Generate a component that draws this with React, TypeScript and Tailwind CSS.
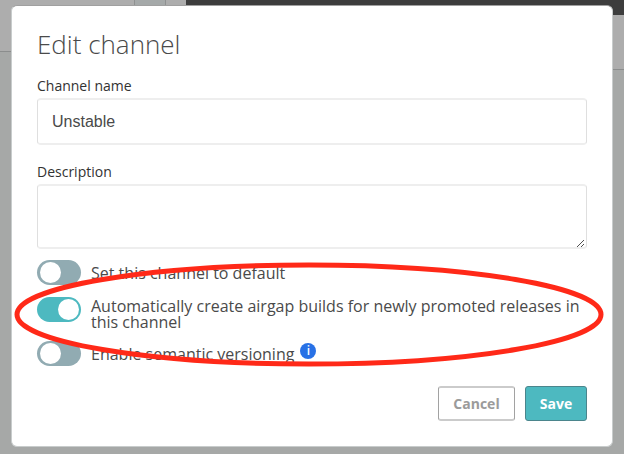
function Toggle({ on = false }: { on?: boolean }) {
  return (
    <span
      className={`flex h-[25px] w-11 shrink-0 items-center rounded-full ${
        on ? 'justify-end bg-[#4db9c0] pr-0.5' : 'justify-start bg-[#91abb2] pl-[3px]'
      }`}
    >
      <span className={on ? 'size-[21px] rounded-full bg-white' : 'size-[21px] rounded-full bg-white'} />
    </span>
  );
}

function Backdrop() {
  return (
    <div className="flex h-[454px] w-full">
      <div className="flex w-[186px] flex-col">
        <div className="flex h-[52px] shrink-0 border-b border-[#8b8d8d] bg-[#adadad]">
          <div className="ml-[134px] w-8 border-x border-[#8f9191] bg-[#a5a9a9]" />
        </div>
        <div className="flex-1 bg-[#a6a8a7]" />
      </div>
      <div className="flex flex-1 flex-col">
        <div className="h-[15px] bg-[#3d3d3d]" />
        <div className="h-[55px] border-b border-[#8b8d8d] bg-[#adadad]" />
        <div className="flex-1 bg-[#a6a8a7]" />
      </div>
    </div>
  );
}

export default function App() {
  return (
    <div className="relative h-[454px] w-[624px] overflow-hidden bg-[#a6a8a7] font-['Open_Sans',sans-serif] text-[#4a4a4a]">
      <Backdrop />
      <div className="absolute top-[5px] left-[11px] flex h-[442px] w-[602px] flex-col rounded-[6px] border border-[#c8cccc] border-t-[#a0a0a0] bg-white px-[25px]">
        <h1 className="mt-[20px] h-9 text-[26px] leading-9 font-light whitespace-nowrap">Edit channel</h1>
        <label className="mt-[15px] h-[18px] text-[14px] leading-[18px] text-[#323232]">Channel name</label>
        <div className="mt-[3px] flex h-[47px] shrink-0 items-center rounded border border-y-2 border-[#dfdfdf] border-y-[#eeeeee] pl-3.5 font-['Liberation_Sans',sans-serif] text-base">
          Unstable
        </div>
        <label className="mt-[18px] h-[18px] text-[14px] leading-[18px] text-[#323232]">Description</label>
        <div className="mt-[3px] flex h-[65px] shrink-0 items-end justify-end rounded border border-y-2 border-[#dfdfdf] border-y-[#eeeeee] pr-px">
          <svg width="8" height="8" viewBox="0 0 8 8" fill="none" stroke="#505050">
            <path d="M0 8 7 1M4 8 7 5" />
          </svg>
        </div>
        <div className="mt-[11px] flex items-center gap-2.5">
          <Toggle />
          <span className="text-base leading-4 whitespace-nowrap">Set this channel to default</span>
        </div>
        <div className="mt-3 flex gap-2.5">
          <Toggle on />
          <span className="mt-px h-8 text-base leading-4 whitespace-nowrap">
            Automatically create airgap builds for newly promoted releases in
            <br />
            this channel
          </span>
        </div>
        <div className="mt-[11px] flex items-center">
          <Toggle />
          <span className="ml-2.5 text-base leading-4 whitespace-nowrap">Enable semantic versioning</span>
          <span className="mb-[5px] ml-1.5 flex size-4 items-center justify-center rounded-full bg-[#2871e6] text-[12px] leading-none font-semibold text-white">
            i
          </span>
        </div>
        <div className="mt-5 flex justify-end gap-2.5 text-[14px] font-bold">
          <button className="h-[35px] w-[77px] rounded-[3px] border border-y-2 border-[#a2a2a2] border-y-[#cbcbcb] text-[#9b9b9b]">Cancel</button>
          <button className="h-[35px] w-[62px] rounded-[3px] border border-[#4b858c] bg-[#4db9c0] text-white">Save</button>
        </div>
      </div>
      <svg className="absolute inset-0" width="624" height="454" viewBox="0 0 624 454" fill="none">
        <ellipse cx="309" cy="314.5" rx="292" ry="49.5" stroke="#ff2918" strokeWidth="5" />
      </svg>
    </div>
  );
}
